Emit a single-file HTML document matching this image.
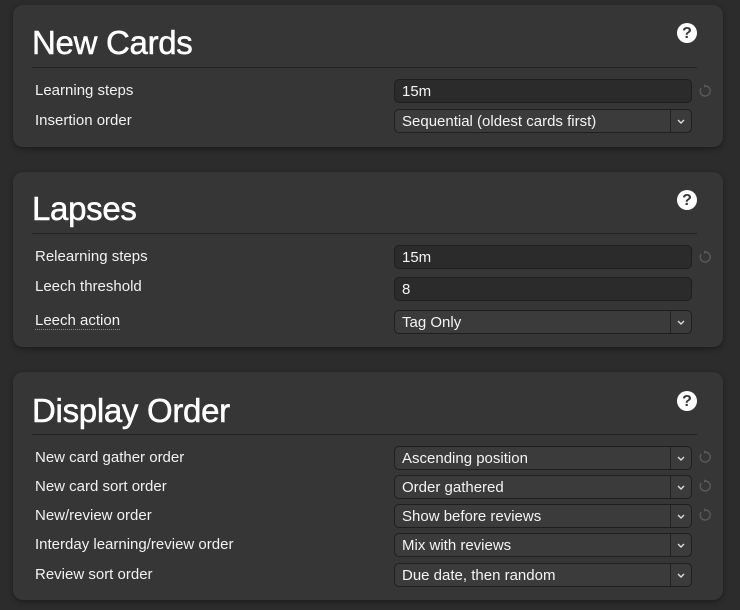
<!DOCTYPE html>
<html><head><meta charset="utf-8"><style>
*{box-sizing:border-box;margin:0;padding:0}
body{width:740px;height:610px;background:#2c2c2c;font-family:"Liberation Sans",sans-serif;color:#fff;position:relative;overflow:hidden}
.card{position:absolute;left:13px;width:710px;background:#363636;border-radius:10px;box-shadow:0 2px 6px rgba(0,0,0,.35)}
.t{position:absolute;left:19px;font-size:33px;color:#fff;letter-spacing:-0.3px;-webkit-text-stroke:0.5px #fff}
.hr{position:absolute;left:19px;width:665px;height:1px;background:#222}
.help{position:absolute;left:664px;width:20px;height:20px;border-radius:50%;background:#fff;color:#363636;font-weight:bold;font-size:16px;text-align:center;line-height:21px}
.l{position:absolute;left:22px;font-size:15px;color:#f2f2f2;margin-top:1px}
.in{position:absolute;left:381px;width:298px;height:24px;background:#2b2b2b;border:1px solid #1f1f1f;border-radius:5px;font-size:15px;line-height:24px;padding-left:7px;color:#f4f4f4}
.sel{background:#3b3b3b}
.sel::after{content:"";position:absolute;right:20px;top:0;bottom:0;width:1px;background:#222}
.chev{position:absolute;right:5px;top:6px;width:10px;height:10px}
.r{position:absolute;left:685px;width:14px;height:14px}
</style></head><body>
<svg width="0" height="0" style="position:absolute"><defs>
<symbol id="ch" viewBox="0 0 10 10"><path d="M2 4 L5 7 L8 4" fill="none" stroke="#ddd" stroke-width="1.4"/></symbol>
<symbol id="rs" viewBox="0 0 14 14"><path d="M3.2 4 A5 5 0 1 0 7 2" fill="none" stroke="#5a5a5a" stroke-width="1.4"/><path d="M6 0.2 L8.4 2 L6 3.8 Z" fill="#5a5a5a"/></symbol>
</defs></svg>

<div class="card" style="top:5px;height:142px">
<div class="t" style="top:19px">New Cards</div>
<div class="help" style="top:18px">?</div>
<div class="hr" style="top:62px"></div>
<div class="l" style="top:76px">Learning steps</div>
<div class="in" style="top:74px">15m</div>
<svg class="r" style="top:79px"><use href="#rs"/></svg>
<div class="l" style="top:106px">Insertion order</div>
<div class="in sel" style="top:104px">Sequential (oldest cards first)<svg class="chev"><use href="#ch"/></svg></div>
</div>

<div class="card" style="top:172px;height:175px">
<div class="t" style="top:18px">Lapses</div>
<div class="help" style="top:18px">?</div>
<div class="hr" style="top:61px"></div>
<div class="l" style="top:75px">Relearning steps</div>
<div class="in" style="top:73px">15m</div>
<svg class="r" style="top:78px"><use href="#rs"/></svg>
<div class="l" style="top:105px">Leech threshold</div>
<div class="in" style="top:105px">8</div>
<div class="l" style="top:140px;border-bottom:1px dotted #888;line-height:16px">Leech action</div>
<div class="in sel" style="top:138px">Tag Only<svg class="chev"><use href="#ch"/></svg></div>
</div>

<div class="card" style="top:372px;height:228px">
<div class="t" style="top:20px">Display Order</div>
<div class="help" style="top:19px">?</div>
<div class="hr" style="top:62px"></div>
<div class="l" style="top:76px">New card gather order</div>
<div class="in sel" style="top:74px">Ascending position<svg class="chev"><use href="#ch"/></svg></div>
<svg class="r" style="top:78px"><use href="#rs"/></svg>
<div class="l" style="top:105px">New card sort order</div>
<div class="in sel" style="top:103px">Order gathered<svg class="chev"><use href="#ch"/></svg></div>
<svg class="r" style="top:107px"><use href="#rs"/></svg>
<div class="l" style="top:134px">New/review order</div>
<div class="in sel" style="top:132px">Show before reviews<svg class="chev"><use href="#ch"/></svg></div>
<svg class="r" style="top:136px"><use href="#rs"/></svg>
<div class="l" style="top:163px">Interday learning/review order</div>
<div class="in sel" style="top:161px">Mix with reviews<svg class="chev"><use href="#ch"/></svg></div>
<div class="l" style="top:193px">Review sort order</div>
<div class="in sel" style="top:191px">Due date, then random<svg class="chev"><use href="#ch"/></svg></div>
</div>
</body></html>
